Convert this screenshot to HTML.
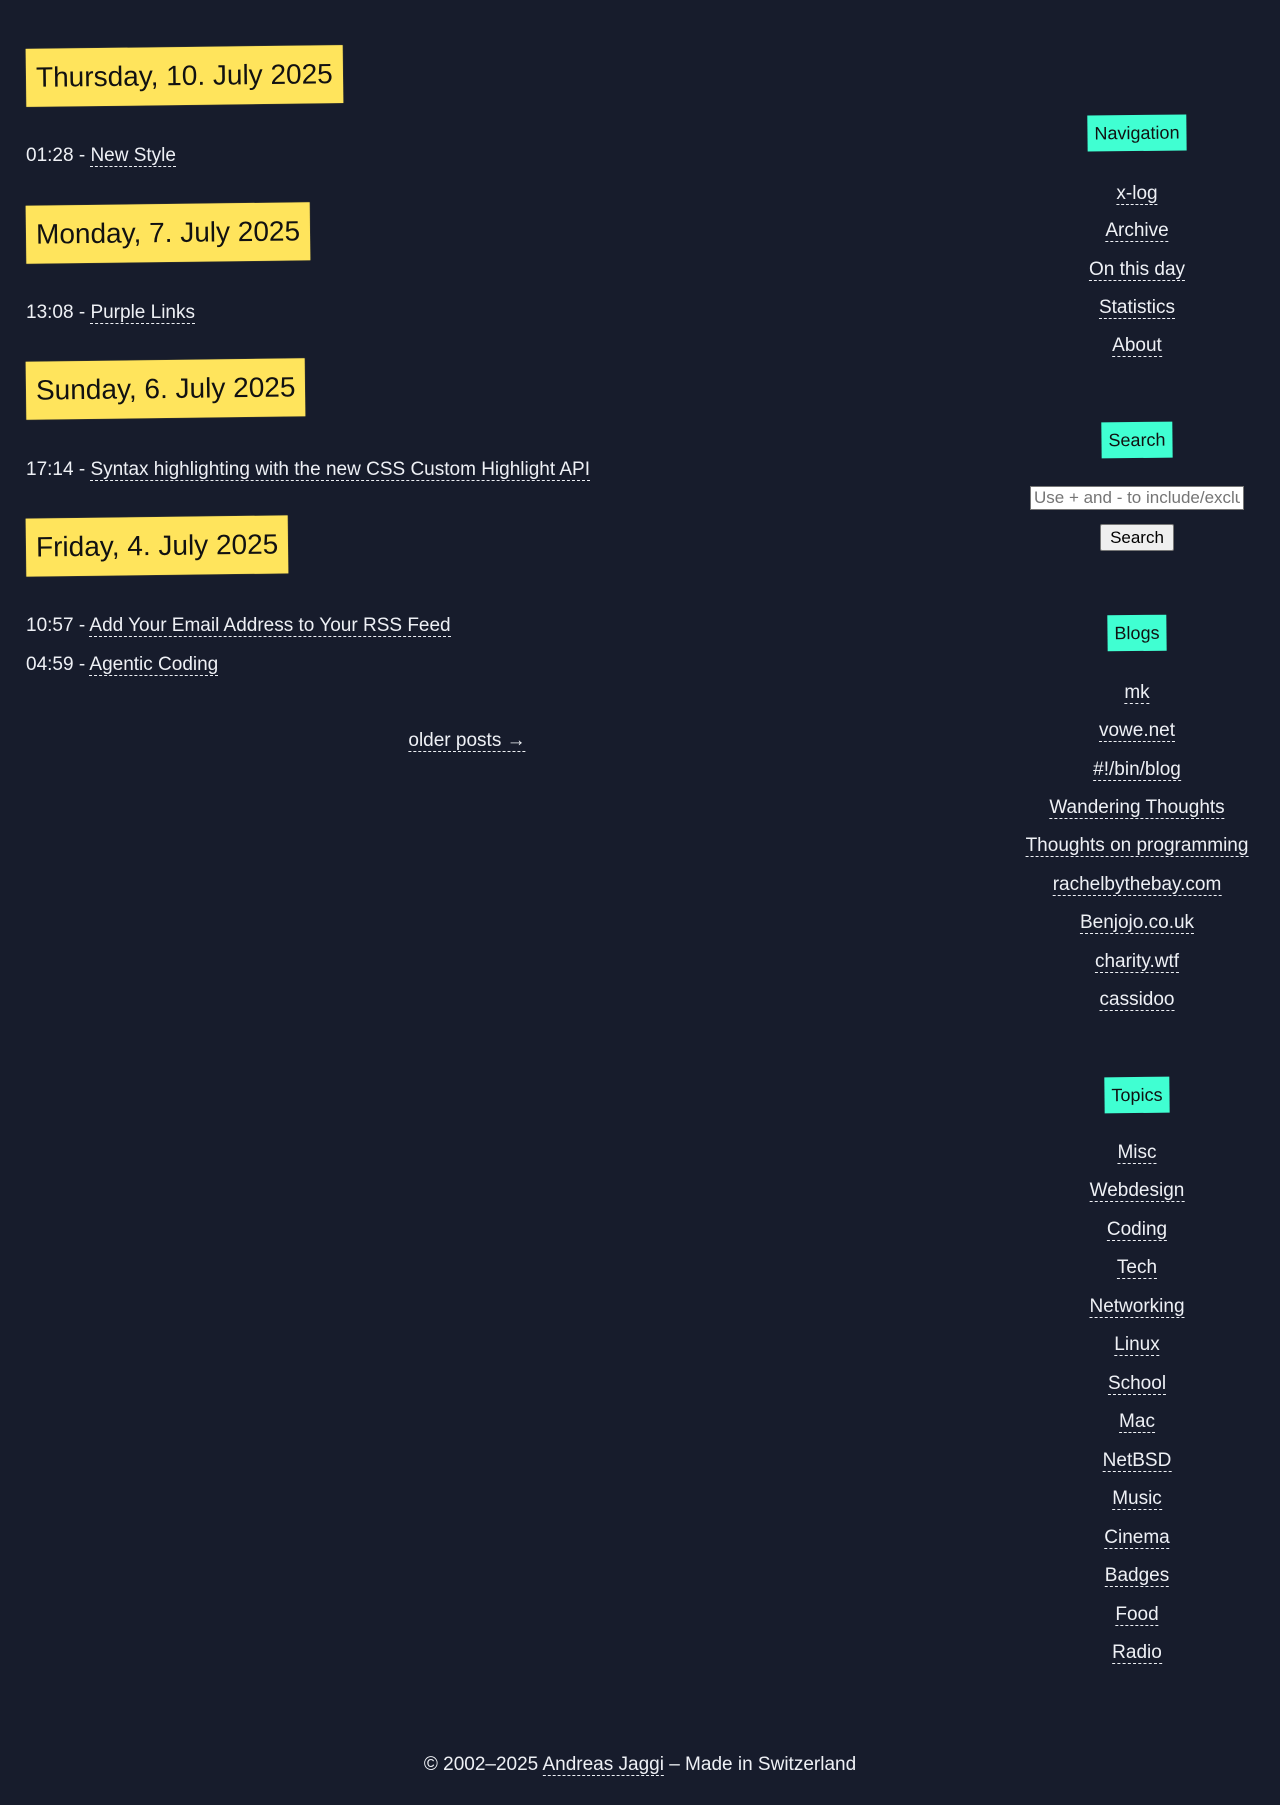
<!DOCTYPE html>
<html><head><meta charset="utf-8"><style>
body{margin:0;background:#171c2c;width:1280px;height:1805px;position:relative;font-family:"Liberation Sans",sans-serif;color:#eef0f5;overflow:hidden}
.h{position:absolute;left:26px;background:#ffe45c;color:#111;font-size:28px;padding:0 10px;height:58px;line-height:58px;transform:rotate(-0.7deg);box-shadow:0 0 1px #8a7d3a}
.p{position:absolute;left:26px;font-size:19px;line-height:24px}
a{color:#eef0f5;text-decoration:none;border-bottom:1px dashed #eef0f5}
.s{position:absolute;left:1137px;transform:translateX(-50%);white-space:nowrap;font-size:19px;line-height:24px;text-align:center}
.t{position:absolute;transform:translateX(-50%) rotate(-0.6deg);background:#40ffd2;color:#111;font-size:18px;height:36px;line-height:36px;padding:0 7px;left:1137px}
</style></head><body>
<div class="h" style="top:47px">Thursday, 10. July 2025</div>
<div class="p" style="top:144px">01:28 - <a>New Style</a></div>
<div class="h" style="top:204px">Monday, 7. July 2025</div>
<div class="p" style="top:301px">13:08 - <a>Purple Links</a></div>
<div class="h" style="top:360px">Sunday, 6. July 2025</div>
<div class="p" style="top:458px">17:14 - <a>Syntax highlighting with the new CSS Custom Highlight API</a></div>
<div class="h" style="top:517px">Friday, 4. July 2025</div>
<div class="p" style="top:614px">10:57 - <a>Add Your Email Address to Your RSS Feed</a></div>
<div class="p" style="top:653px">04:59 - <a>Agentic Coding</a></div>
<div class="p" style="top:729px;left:467px;transform:translateX(-50%)"><a>older posts →</a></div>

<div class="t" style="top:115px">Navigation</div>
<div class="s" style="top:182px"><a>x-log</a></div>
<div class="s" style="top:219px"><a>Archive</a></div>
<div class="s" style="top:258px"><a>On this day</a></div>
<div class="s" style="top:296px"><a>Statistics</a></div>
<div class="s" style="top:334px"><a>About</a></div>

<div class="t" style="top:422px">Search</div>
<input style="position:absolute;left:1030px;top:486px;width:206px;height:22px;box-sizing:content-box;padding:0 3px;border:1px solid #767676;font-size:17px;font-family:'Liberation Sans',sans-serif;margin:0" placeholder="Use + and - to include/exclude">
<button style="position:absolute;left:1100px;top:524px;height:27px;width:74px;font-size:17px;font-family:'Liberation Sans',sans-serif;background:#efefef;border:1px solid #767676;border-radius:2px;padding:0;color:#000">Search</button>

<div class="t" style="top:615px">Blogs</div>
<div class="s" style="top:681px"><a>mk</a></div>
<div class="s" style="top:719px"><a>vowe.net</a></div>
<div class="s" style="top:758px"><a>#!/bin/blog</a></div>
<div class="s" style="top:796px"><a>Wandering Thoughts</a></div>
<div class="s" style="top:834px"><a>Thoughts on programming</a></div>
<div class="s" style="top:873px"><a>rachelbythebay.com</a></div>
<div class="s" style="top:911px"><a>Benjojo.co.uk</a></div>
<div class="s" style="top:950px"><a>charity.wtf</a></div>
<div class="s" style="top:988px"><a>cassidoo</a></div>

<div class="t" style="top:1077px">Topics</div>
<div class="s" style="top:1141px"><a>Misc</a></div>
<div class="s" style="top:1179px"><a>Webdesign</a></div>
<div class="s" style="top:1218px"><a>Coding</a></div>
<div class="s" style="top:1256px"><a>Tech</a></div>
<div class="s" style="top:1295px"><a>Networking</a></div>
<div class="s" style="top:1333px"><a>Linux</a></div>
<div class="s" style="top:1372px"><a>School</a></div>
<div class="s" style="top:1410px"><a>Mac</a></div>
<div class="s" style="top:1449px"><a>NetBSD</a></div>
<div class="s" style="top:1487px"><a>Music</a></div>
<div class="s" style="top:1526px"><a>Cinema</a></div>
<div class="s" style="top:1564px"><a>Badges</a></div>
<div class="s" style="top:1603px"><a>Food</a></div>
<div class="s" style="top:1641px"><a>Radio</a></div>

<div class="p" style="top:1753px;left:640px;transform:translateX(-50%);white-space:nowrap">© 2002–2025 <a>Andreas Jaggi</a> – Made in Switzerland</div>
</body></html>
